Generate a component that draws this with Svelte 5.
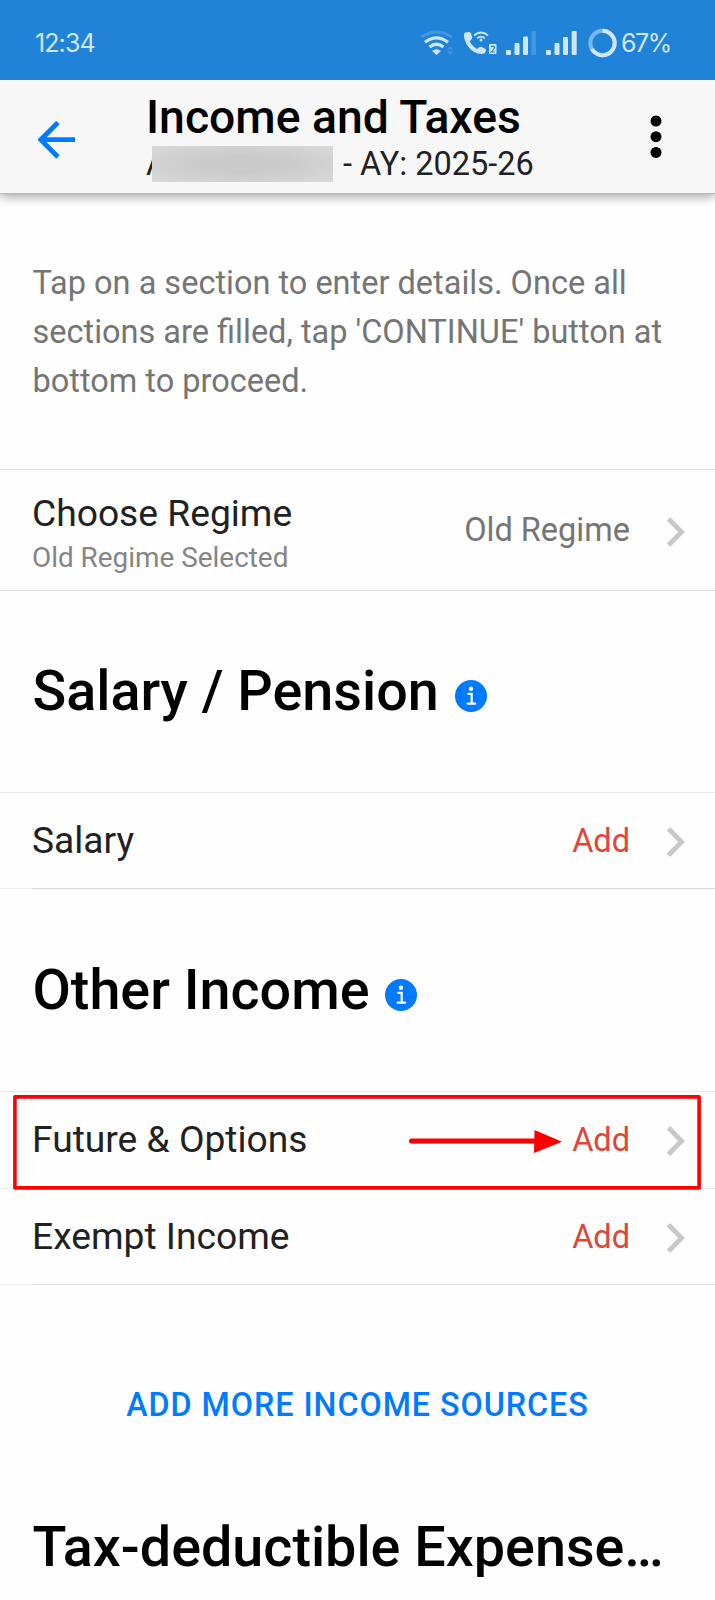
<script lang="ts">
	type Row = { label: string; highlighted?: boolean };

	const salary_rows: Row[] = [{ label: 'Salary' }];
	const other_rows: Row[] = [{ label: 'Future & Options', highlighted: true }, { label: 'Exempt Income' }];
</script>

{#snippet chevron()}
	<svg class="chevron" width="20" height="32" viewBox="0 0 20 32">
		<path d="M2.5 2.7 L15.5 16 L2.5 29.3" fill="none" stroke="#c8c8c8" stroke-width="4.8" />
	</svg>
{/snippet}

{#snippet info()}
	<svg class="info" width="32" height="32" viewBox="0 0 32 32">
		<circle cx="16" cy="16" r="16" fill="#007aff" />
		<circle cx="16" cy="8.7" r="2.2" fill="#fff" />
		<path d="M13.2 13.8 H16.7 V23.4 M12.6 23.6 H20.2" fill="none" stroke="#fff" stroke-width="2.2" stroke-linecap="round" />
	</svg>
{/snippet}

{#snippet row(item: Row)}
	<div class="row">
		<span class="label">{item.label}</span>
		<span class="add">Add</span>
		{@render chevron()}
		{#if item.highlighted}
			<svg class="highlight" width="688" height="96" viewBox="0 0 688 96" fill="none" stroke="#f00">
				<rect x="1.900" y="1.900" width="684.200" height="91" stroke-width="3.600" stroke-linejoin="round" />
				<path d="M398.500 46 H524" stroke-width="5" stroke-linecap="round" />
				<path d="M521.500 35 L549 46.700 L521 58 Z" fill="#f00" stroke="none" />
			</svg>
		{/if}
	</div>
{/snippet}

<div class="screen">
	<div class="status">
		<span class="time">12:34</span>
		<svg class="icons" width="200" height="30" viewBox="418 28 200 30">
			<g fill="none" stroke="#cfe6fb">
				<path d="M421.5 37 Q436.500 27 451.500 37" stroke="#4596e0" stroke-width="3" />
				<path d="M425 42.300 Q436.500 33.500 448 42.300" stroke-width="3.200" />
				<path d="M429.500 47 Q436.500 41.500 443.500 47" stroke-width="3.200" />
				<path d="M474 35.500 Q481 29.500 488 35.500" stroke-width="1.700" />
				<path d="M477 38.300 Q481 34.800 485 38.300" stroke-width="1.600" />
			</g>
			<g fill="#cfe6fb">
				<path d="M432 51 Q436.500 47.500 441 51 L436.500 55 Z" />
				<circle cx="481" cy="40" r="1.500" />
				<path d="M465 32.500 L469.500 32 Q470.500 32 471 33.500 L472.300 37.500 Q472.300 39 469.700 41.200 Q472 46 477.200 49 Q479.500 46.500 481 46.800 L485 48.800 Q486.300 49.500 486 50.800 Q485 54 481.500 54 Q473.500 53.500 468.500 47 Q463.500 40 464 34 Z" />
				<rect x="489" y="44" width="7.500" height="10" rx="1" />
				<rect x="506" y="50" width="5" height="5" rx="1" />
				<rect x="514.500" y="43" width="5" height="12" rx="1" />
				<rect x="523" y="36.500" width="5" height="18.500" rx="1" />
				<rect x="546" y="50" width="5" height="5" rx="1" />
				<rect x="554.500" y="43" width="5" height="12" rx="1" />
				<rect x="563" y="37" width="5" height="18" rx="1" />
				<rect x="571.700" y="31" width="5" height="24" rx="1" />
			</g>
			<g fill="#4596e0">
				<rect x="531.500" y="31" width="4.500" height="24" rx="1" />
				<path d="M447.500 49.500 L450.300 46 L453 49.500 Z M447.500 51.500 H453 L450.300 55 Z" />
			</g>
			<path d="M491 46.800 Q493 45.200 494.500 47 Q495 48.500 491.300 52 H494.800" fill="none" stroke="#2083d8" stroke-width="1.200" />
			<circle cx="602.500" cy="43" r="12.200" fill="none" stroke="#79b6ea" stroke-width="4" />
			<path d="M602.500 30.800 A12.200 12.200 0 1 1 591.800 48.900" fill="none" stroke="#cfe6fb" stroke-width="4" />
		</svg>
		<span class="battery">67%</span>
	</div>

	<header>
		<svg class="back" width="38" height="38" viewBox="0 0 38 38">
			<path d="M37 18.700 H3 M20 1.500 L2.800 18.700 L20 36" fill="none" stroke="#007aff" stroke-width="4.800" />
		</svg>
		<div class="titles">
			<h1>Income and Taxes</h1>
			<div class="subtitle">
				<span class="pan">A<i class="mask"></i></span>
				<span class="year">- AY: 2025-26</span>
			</div>
		</div>
		<svg class="dots" width="12" height="44" viewBox="0 0 12 44">
			<circle cx="6" cy="6" r="5.500" />
			<circle cx="6" cy="21.700" r="5.500" />
			<circle cx="6" cy="37.400" r="5.500" />
		</svg>
	</header>

	<p class="intro">
		Tap on a section to enter details. Once all<br />sections are filled, tap 'CONTINUE' button at<br />bottom to proceed.
	</p>

	<div class="regime">
		<div class="regime-text">
			<span class="label">Choose Regime</span>
			<span class="note">Old Regime Selected</span>
		</div>
		<span class="value">Old Regime</span>
		{@render chevron()}
	</div>

	<h2 class="salary"><span>Salary / Pension</span>{@render info()}</h2>
	<div class="list">
		{#each salary_rows as item}
			{@render row(item)}
		{/each}
	</div>

	<h2 class="other"><span>Other Income</span>{@render info()}</h2>
	<div class="list">
		{#each other_rows as item}
			{@render row(item)}
		{/each}
	</div>

	<button>ADD MORE INCOME SOURCES</button>

	<h2 class="tax"><span>Tax-deductible Expense…</span></h2>
</div>

<style>
	:global(body) {
		margin: 0;
		background: #fff;
	}

	.screen {
		width: 715px;
		height: 1600px;
		overflow: hidden;
		background: #fefefe;
		color: #212121;
		font-family: Roboto, sans-serif;
	}

	.status {
		position: relative;
		z-index: 1;
		display: flex;
		align-items: center;
		box-sizing: border-box;
		height: 80px;
		padding: 6px 0 0 35px;
		background: #2083d8;
		color: #cfe6fb;
		font-family: Inter, sans-serif;
		font-weight: 400;
		font-size: 25px;
	}
	.time {
		width: 383px;
		letter-spacing: -0.9px;
	}
	.icons {
		flex: none;
	}
	.battery {
		margin-left: 3px;
		letter-spacing: -1.5px;
	}

	header {
		position: relative;
		display: flex;
		box-sizing: border-box;
		height: 113px;
		background: #f7f7f7;
		box-shadow: 0 1px 1px #bbb, 0 3px 11px rgba(0, 0, 0, 0.4);
	}
	.back {
		margin: 41px 0 0 38px;
	}
	.titles {
		flex: 1;
		margin-left: 70px;
	}
	h1 {
		margin: 10px 0 0;
		color: #000;
		font-size: 46.3px;
		font-weight: 500;
		line-height: 54px;
	}
	.subtitle {
		display: flex;
		height: 38px;
		font-size: 32.5px;
		line-height: 41px;
		white-space: pre;
	}
	.pan {
		position: relative;
		width: 197px;
	}
	.mask {
		position: absolute;
		top: 2px;
		left: 6px;
		width: 181px;
		height: 36px;
		background: radial-gradient(ellipse at center, #cacaca 30%, #d9d9d9 100%);
	}
	.dots {
		margin: 35px 53px 0 0;
	}

	.intro {
		height: 147px;
		margin: 66px 0 63px 32.5px;
		color: #757575;
		font-size: 32.5px;
		line-height: 49px;
		white-space: nowrap;
	}

	.regime {
		display: flex;
		align-items: center;
		box-sizing: border-box;
		height: 122px;
		padding: 1px 30px 0 32px;
		border-top: 1px solid #dedede;
		border-bottom: 1px solid #dedede;
	}
	.regime-text {
		display: flex;
		flex: 1;
		flex-direction: column;
		padding-top: 8px;
	}
	.label {
		font-size: 37.2px;
		line-height: 46px;
	}
	.note {
		color: #858585;
		font-size: 27.9px;
		line-height: 43px;
	}
	.value {
		padding-bottom: 1px;
		color: #757575;
		font-size: 32.5px;
	}
	.chevron {
		position: relative;
		top: 1px;
		left: 1px;
		margin-left: 35px;
	}

	h2 {
		display: flex;
		margin: 0;
		padding-left: 32.5px;
		color: #000;
		font-size: 55.7px;
		font-weight: 500;
		line-height: 66px;
		white-space: nowrap;
	}
	.salary,
	.other {
		box-sizing: border-box;
		height: 201px;
		padding-top: 67px;
	}
	.other {
		height: 202px;
		padding-top: 68px;
	}
	.info {
		margin: 22px 0 0 16px;
	}

	.list {
		border-top: 1px solid #e8e8e8;
		background: linear-gradient(#dadada, #dadada) 32px 100% / 100% 1px no-repeat,
			linear-gradient(#f0f0f0, #f0f0f0) 0 100% / 100% 1px no-repeat;
	}
	.row {
		position: relative;
		display: flex;
		align-items: center;
		box-sizing: border-box;
		height: 96px;
		padding: 0 30px 0 32px;
	}
	.row + .row {
		height: 97px;
		border-top: 1px solid #e8e8e8;
	}
	.row .label {
		flex: 1;
		padding-bottom: 2px;
	}
	.add {
		color: #e0453a;
		font-size: 32.5px;
	}
	.highlight {
		position: absolute;
		z-index: 1;
		top: 3px;
		left: 13px;
	}

	button {
		display: block;
		width: 100%;
		height: 40px;
		margin: 100px 0 0;
		padding: 0;
		border: 0;
		background: none;
		color: #007aff;
		font: 500 32.3px/40px Roboto, sans-serif;
		letter-spacing: 0.95px;
	}
	.tax {
		margin-top: 89px;
	}
</style>
